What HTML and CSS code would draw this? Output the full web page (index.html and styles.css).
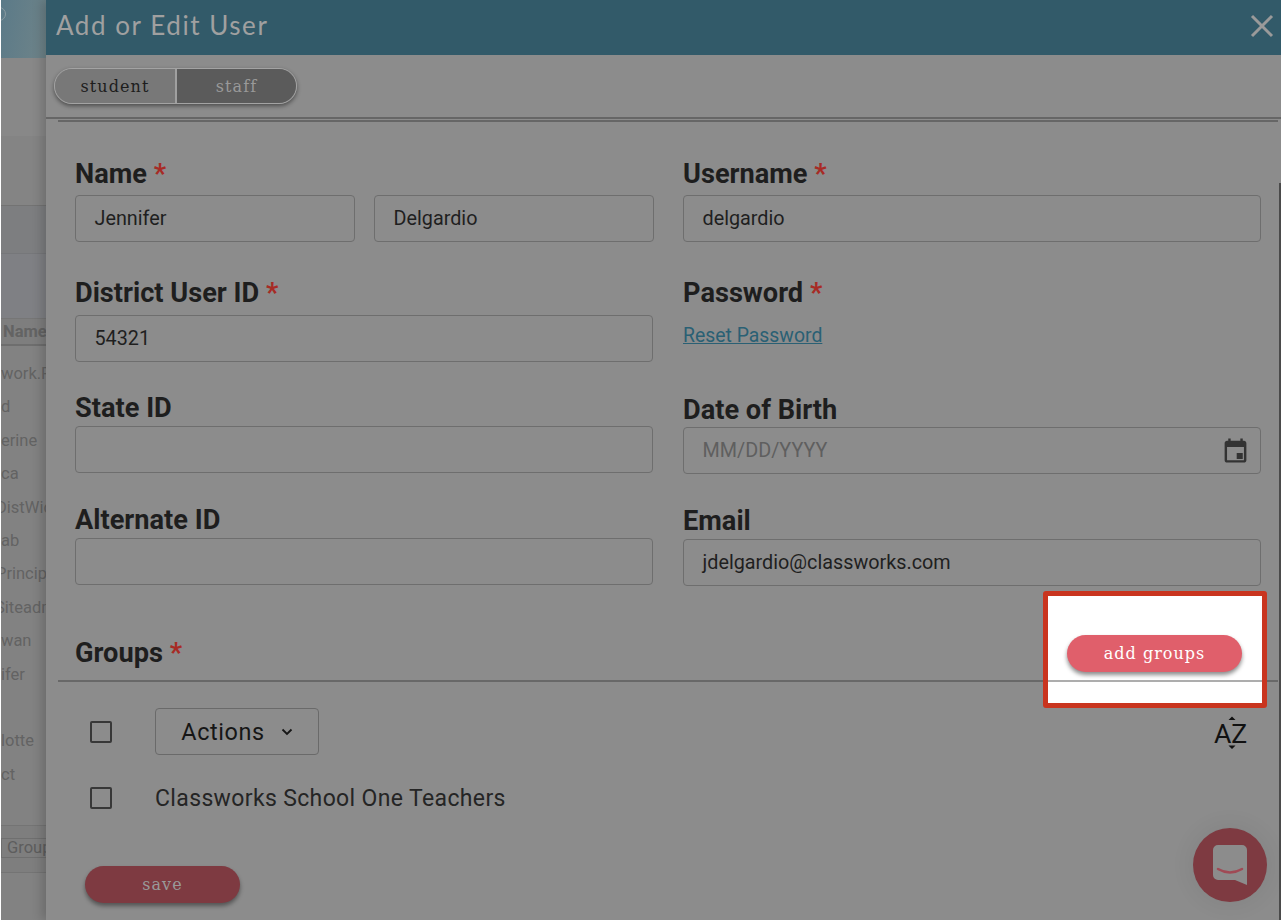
FILE: index.html
```html
<!DOCTYPE html>
<html lang="en">
<head>
<meta charset="utf-8">
<title>Add or Edit User</title>
<link rel="stylesheet" href="styles.css">
</head>
<body>
<div class="stage">
  <aside class="behind">
    <div class="behind-head"><span class="behind-ring"></span></div>
    <div class="behind-band-a"></div>
    <div class="behind-band-b"></div>
    <div class="behind-gap-a"></div>
    <div class="behind-band-c"></div>
    <div class="behind-gap-b"></div>
    <div class="behind-th">Name</div>
    <ul class="behind-list">
      <li class="cut">work.R</li>
      <li class="cut">d</li>
      <li class="cut">erine</li>
      <li class="cut">ca</li>
      <li class="cut cut-a">DistWid</li>
      <li class="cut">ab</li>
      <li class="cut cut-a">Principal</li>
      <li class="cut cut-b">Siteadm</li>
      <li class="cut">wan</li>
      <li class="cut">ifer</li>
      <li class="cut"></li>
      <li class="cut">lotte</li>
      <li class="cut">ct</li>
    </ul>
    <div class="behind-foot"><span class="behind-group">Group</span></div>
  </aside>
  <main class="modal">
    <header class="modal-head">
      <h1 class="modal-title">Add or Edit User</h1>
      <svg class="close" viewBox="0 0 24 24" aria-label="close"><path d="M2 2 L22 22 M22 2 L2 22"/></svg>
    </header>
    <div class="toggle-row">
      <div class="toggle">
        <span class="toggle-on">student</span>
        <span class="toggle-off">staff</span>
      </div>
    </div>
    <div class="rule-a"></div>
    <div class="rule-b"></div>
    <form class="form">
      <div class="col">
        <div class="field f-name">
          <label class="lab">Name <b class="req">*</b></label>
          <div class="pair">
            <div class="input">Jennifer</div>
            <div class="input">Delgardio</div>
          </div>
        </div>
        <div class="field f-district">
          <label class="lab">District User ID <b class="req">*</b></label>
          <div class="input">54321</div>
        </div>
        <div class="field f-state">
          <label class="lab lab-short">State ID</label>
          <div class="input"></div>
        </div>
        <div class="field f-alt">
          <label class="lab lab-short">Alternate ID</label>
          <div class="input"></div>
        </div>
      </div>
      <div class="col">
        <div class="field f-name">
          <label class="lab">Username <b class="req">*</b></label>
          <div class="input">delgardio</div>
        </div>
        <div class="field f-pass">
          <label class="lab lab-tall">Password <b class="req">*</b></label>
          <a class="link">Reset Password</a>
        </div>
        <div class="field f-dob">
          <label class="lab lab-dob">Date of Birth</label>
          <div class="input input-date"><span class="ph">MM/DD/YYYY</span>
            <svg class="cal" viewBox="0 0 24 24"><path d="M19 4h-1V2h-2v2H8V2H6v2H5c-1.100 0-2 .9-2 2v14c0 1.100.9 2 2 2h14c1.100 0 2-.9 2-2V6c0-1.100-.9-2-2-2zm0 16H5V9h14v11zm-6-6h5v5h-5z"/></svg>
          </div>
        </div>
        <div class="field f-email">
          <label class="lab lab-short">Email</label>
          <div class="input">jdelgardio@classworks.com</div>
        </div>
      </div>
    </form>
    <div class="groups-head"><span class="lab">Groups <b class="req">*</b></span></div>
    <div class="groups-rule"></div>
    <div class="actions-row">
      <span class="check"></span>
      <div class="actions-btn">Actions
        <svg class="chev" viewBox="0 0 12 8"><path d="M1.500 1.500 L6 6 L10.500 1.500"/></svg>
      </div>
      <svg class="sort" viewBox="0 0 36 36">
        <path class="sort-tri" d="M19 2.500 L22.500 6 H15.500 Z M19 35 L15.500 31.500 H22.500 Z"/>
        <text class="sort-text" x="1" y="28.500">AZ</text>
      </svg>
    </div>
    <div class="group-row">
      <span class="check"></span>
      <span class="group-name">Classworks School One Teachers</span>
    </div>
    <div class="save">save</div>
    <div class="scrollbar"></div>
  </main>
  <div class="callout">
    <div class="callout-rule"></div>
    <div class="add-groups">add groups</div>
  </div>
  <div class="chat">
    <svg viewBox="0 0 34 40"><path class="bubble" d="M5 0H29a5 5 0 0 1 5 5V40L22 35H5a5 5 0 0 1-5-5V5a5 5 0 0 1 5-5z"/><path class="smile" d="M5 24Q17 31 29 24"/></svg>
  </div>
</div>
</body>
</html>
```
FILE: styles.css
```css
* { box-sizing: border-box; }
html, body { margin: 0; padding: 0; background: #fff; }
body { width: 1288px; height: 920px; overflow: hidden; font-family: Roboto, "Liberation Sans", sans-serif; }
.stage { position: relative; display: flex; width: 1280px; height: 920px; margin-left: 1px; overflow: hidden; background: #838383; }

.behind { width: 45px; flex: none; overflow: hidden; background: #828282; color: #636363; font-size: 16.500px; }
.behind-head { position: relative; height: 58px; background: linear-gradient(100deg, #5b7a88, #6f8489); overflow: hidden; }
.behind-ring { position: absolute; left: -9px; top: 7px; width: 14px; height: 14px; border: 1px solid #8a9ba2; border-radius: 50%; }
.behind-band-a { height: 78px; background: #888; }
.behind-band-b { height: 69px; background: #848484; }
.behind-gap-a { height: 1px; background: #737373; }
.behind-band-c { height: 47px; background: #7d7e80; }
.behind-gap-b { height: 65px; background: #7f8084; border-top: 1px solid #76777a; }
.behind-th { height: 28px; padding-left: 2px; font-weight: 700; line-height: 26px; color: #636363; border-top: 1px solid #767676; border-bottom: 2px solid #6e6e6e; background: #7e7e7e; }
.behind-list { margin: 0; padding: 15px 0 0; list-style: none; }
.cut { height: 33.400px; line-height: 26px; white-space: nowrap; }
.cut-a { margin-left: -5px; }
.cut-b { margin-left: -6px; }
.behind-foot { margin-top: 30px; height: 48px; padding-top: 12px; border-top: 1px solid #747474; border-bottom: 1px solid #747474; background: #7e7e7e; }
.behind-group { display: block; padding-left: 5px; height: 20px; line-height: 18px; color: #5d5d5d; border: 1px solid #6f6f6f; border-right: 0; }

.modal { position: relative; width: 1235px; flex: none; background: #8c8c8c; box-shadow: -4px 0 10px rgba(0,0,0,.18); }
.modal-head { display: flex; align-items: center; justify-content: space-between; height: 55px; padding: 0 7px 6px 10px; background: #325a69; }
.modal-title { margin: 0; font-family: Lato, sans-serif; font-size: 26px; font-weight: 400; letter-spacing: 1.550px; color: #a0a0a0; }
.close { width: 24px; height: 24px; margin-top: 2px; }
.close path { fill: none; stroke: #9a9a9a; stroke-width: 3; }

.toggle-row { height: 62px; padding: 13px 0 0 8px; }
.toggle { display: flex; width: 243px; height: 36px; border: 1px solid #a3a3a3; border-radius: 18px; overflow: hidden; box-shadow: 0 2px 4px rgba(0,0,0,.45); font-family: "DejaVu Serif", "Liberation Serif", serif; font-size: 16px; letter-spacing: 1.100px; }
.toggle-on { width: 122px; display: flex; align-items: center; justify-content: center; background: #787878; color: #1d1d1d; border-right: 2px solid #a0a0a0; }
.toggle-off { flex: 1; display: flex; align-items: center; justify-content: center; background: #5b5b5b; color: #999; }
.rule-a { height: 2px; background: #666; }
.rule-b { height: 2px; margin: 1px 3px 0 12px; background: #666; }

.form { display: grid; grid-template-columns: 578px 578px; column-gap: 30px; padding: 0 0 0 29px; height: 514px; }
.col { display: flex; flex-direction: column; }
.field { display: flex; flex-direction: column; }
.f-name { padding-top: 35px; }
.f-district { padding-top: 34px; }
.f-state { padding-top: 29px; }
.f-alt { padding-top: 30px; }
.f-pass { padding-top: 34px; }
.f-dob { padding-top: 45px; }
.f-email { padding-top: 30px; }
.lab { display: block; height: 38px; font-size: 27.200px; font-weight: 700; line-height: 34px; color: #1e1e1e; }
.lab-tall { height: 39px; }
.lab-short { height: 35px; }
.lab-dob { height: 34px; }
.f-district .lab { height: 39px; }
.req { color: #a72b25; font-weight: 700; }
.input { position: relative; display: flex; align-items: center; height: 47px; padding: 0 18.500px; border: 1px solid #6e6e6e; border-radius: 4px; font-size: 19.800px; color: #1f1f1f; }
.pair { display: grid; grid-template-columns: 280px 280px; column-gap: 19px; }
.link { margin-top: 9px; font-size: 19.400px; line-height: 24px; color: #2a6074; text-decoration: underline; }
.ph { color: #5f5f5f; }
.input-date { justify-content: space-between; padding-right: 10px; }
.cal { width: 29px; height: 29px; fill: #333; }

.groups-head { height: 44px; padding-left: 29px; }
.groups-rule { height: 2px; margin: 0 3px 0 12px; background: #686868; }
.actions-row { display: flex; align-items: center; height: 47px; margin-top: 26px; padding: 0 32px 0 44px; }
.check { width: 22px; height: 22px; flex: none; border: 2px solid #383838; border-radius: 2px; }
.actions-btn { display: flex; align-items: center; justify-content: center; gap: 16px; width: 164px; height: 47px; margin-left: 43px; border: 1px solid #6a6a6a; border-radius: 4px; font-size: 23.400px; letter-spacing: .6px; color: #161616; }
.chev { width: 12px; height: 8px; }
.chev path { fill: none; stroke: #161616; stroke-width: 1.800; }
.sort { width: 36px; height: 36px; margin-left: auto; }
.sort-tri { fill: #111; }
.sort-text { font-family: Roboto, sans-serif; font-size: 26.600px; fill: #111; }
.group-row { display: flex; align-items: center; height: 32px; margin-top: 27px; padding-left: 44px; }
.group-name { margin-left: 43px; font-size: 23px; letter-spacing: .36px; color: #252525; }
.save { display: flex; align-items: center; justify-content: center; width: 155px; height: 37px; margin: 52px 0 0 39px; border-radius: 19px; background: #7e3a41; color: #999; font-family: "DejaVu Serif", "Liberation Serif", serif; font-size: 16px; letter-spacing: 1.100px; box-shadow: 0 3px 4px rgba(0,0,0,.4); }
.scrollbar { position: absolute; right: 0; top: 183px; bottom: 0; width: 2px; background: #4a4a4a; }

.callout { position: absolute; left: 1042px; top: 591px; width: 224px; height: 117px; background: #fff; border: 5px solid #c9351f; border-radius: 3px; }
.callout-rule { position: absolute; left: 0; right: 0; top: 84px; height: 2px; background: #adadad; }
.add-groups { position: absolute; left: 19px; top: 39px; display: flex; align-items: center; justify-content: center; width: 175px; height: 37px; border-radius: 19px; background: #e05f6b; color: #fff; font-family: "DejaVu Serif", "Liberation Serif", serif; font-size: 16px; letter-spacing: 1px; box-shadow: 0 3px 4px rgba(0,0,0,.45); }

.chat { position: absolute; left: 1192px; top: 828px; display: flex; align-items: center; justify-content: center; width: 74px; height: 74px; border-radius: 50%; background: #7e3a41; box-shadow: 0 0 24px rgba(0,0,0,.08); }
.chat svg { width: 34px; height: 40px; }
.bubble { fill: #8c8c8c; }
.smile { fill: none; stroke: #a04a55; stroke-width: 2.500; stroke-linecap: round; }
```
